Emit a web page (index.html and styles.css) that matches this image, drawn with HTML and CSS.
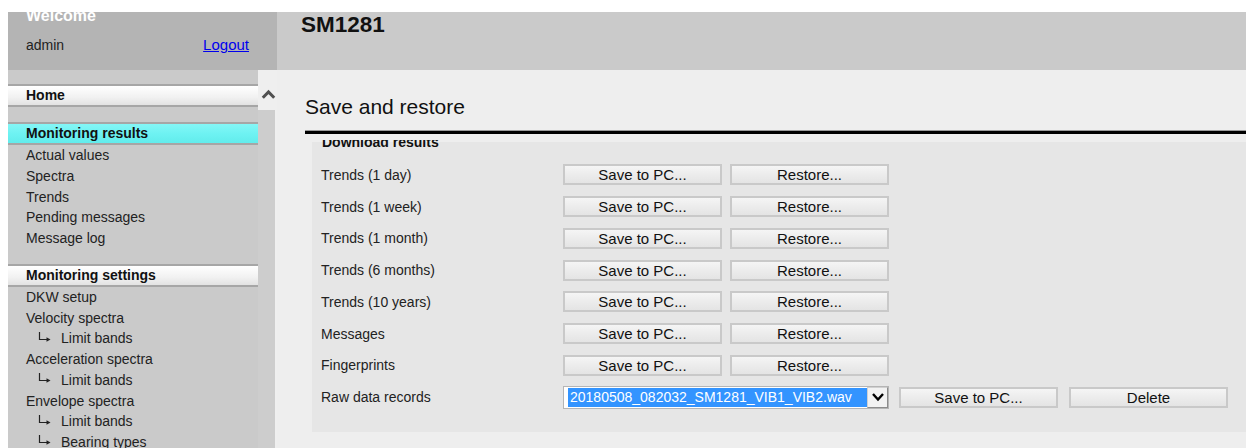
FILE: index.html
```html
<!DOCTYPE html>
<html lang="en">
<head>
<meta charset="utf-8">
<title>SM1281 - Save and restore</title>
<link rel="stylesheet" href="styles.css">
</head>
<body>
<div class="app">
  <div class="user">
    <div class="welcome">Welcome</div>
    <div class="user-row">
      <span class="user-name">admin</span>
      <a class="logout" href="#">Logout</a>
    </div>
  </div>
  <div class="device">SM1281</div>

  <nav class="nav">
    <div class="nav-head nav-home">Home</div>
    <div class="nav-head nav-active">Monitoring results</div>
    <div class="nav-item">Actual values</div>
    <div class="nav-item">Spectra</div>
    <div class="nav-item">Trends</div>
    <div class="nav-item">Pending messages</div>
    <div class="nav-item">Message log</div>
    <div class="nav-head nav-group">Monitoring settings</div>
    <div class="nav-item">DKW setup</div>
    <div class="nav-item">Velocity spectra</div>
    <div class="nav-item nav-sub"><svg class="sub-arrow" width="14" height="10" viewBox="0 0 14 10"><path d="M1.5 0V7.5H9" fill="none" stroke="#222" stroke-width="1.2"/><path d="M8.5 5.2L12.5 7.5L8.5 9.8Z" fill="#222"/></svg>Limit bands</div>
    <div class="nav-item">Acceleration spectra</div>
    <div class="nav-item nav-sub"><svg class="sub-arrow" width="14" height="10" viewBox="0 0 14 10"><path d="M1.5 0V7.5H9" fill="none" stroke="#222" stroke-width="1.2"/><path d="M8.5 5.2L12.5 7.5L8.5 9.8Z" fill="#222"/></svg>Limit bands</div>
    <div class="nav-item">Envelope spectra</div>
    <div class="nav-item nav-sub"><svg class="sub-arrow" width="14" height="10" viewBox="0 0 14 10"><path d="M1.5 0V7.5H9" fill="none" stroke="#222" stroke-width="1.2"/><path d="M8.5 5.2L12.5 7.5L8.5 9.8Z" fill="#222"/></svg>Limit bands</div>
    <div class="nav-item nav-sub"><svg class="sub-arrow" width="14" height="10" viewBox="0 0 14 10"><path d="M1.5 0V7.5H9" fill="none" stroke="#222" stroke-width="1.2"/><path d="M8.5 5.2L12.5 7.5L8.5 9.8Z" fill="#222"/></svg>Bearing types</div>
  </nav>

  <div class="scrollbar">
    <div class="scroll-up"><svg width="15" height="11" viewBox="0 0 15 11"><path d="M1.8 8.8L7.5 3L13.2 8.8" fill="none" stroke="#505050" stroke-width="3"/></svg></div>
    <div class="scroll-thumb"></div>
  </div>

  <main class="main">
    <h1 class="title">Save and restore</h1>
    <div class="rule"></div>
    <div class="viewport">
      <fieldset class="panel">
        <legend class="panel-legend">Download results</legend>
        <div class="rows">
          <div class="row"><span class="label">Trends (1 day)</span><button class="btn">Save to PC...</button><button class="btn">Restore...</button></div>
          <div class="row"><span class="label">Trends (1 week)</span><button class="btn">Save to PC...</button><button class="btn">Restore...</button></div>
          <div class="row"><span class="label">Trends (1 month)</span><button class="btn">Save to PC...</button><button class="btn">Restore...</button></div>
          <div class="row"><span class="label">Trends (6 months)</span><button class="btn">Save to PC...</button><button class="btn">Restore...</button></div>
          <div class="row"><span class="label">Trends (10 years)</span><button class="btn">Save to PC...</button><button class="btn">Restore...</button></div>
          <div class="row"><span class="label">Messages</span><button class="btn">Save to PC...</button><button class="btn">Restore...</button></div>
          <div class="row"><span class="label">Fingerprints</span><button class="btn">Save to PC...</button><button class="btn">Restore...</button></div>
          <div class="row"><span class="label">Raw data records</span>
            <div class="select">
              <span class="select-value">20180508_082032_SM1281_VIB1_VIB2.wav</span>
              <span class="select-arrow"><svg width="14" height="10" viewBox="0 0 14 10"><path d="M2 2L7 7.5L12 2" fill="none" stroke="#000" stroke-width="2.4"/></svg></span>
            </div>
            <button class="btn btn-save">Save to PC...</button><button class="btn btn-delete">Delete</button>
          </div>
        </div>
      </fieldset>
    </div>
  </main>
</div>
</body>
</html>
```

FILE: styles.css
```css
html, body {
  margin: 0;
  padding: 0;
  background: #ffffff;
  overflow: hidden;
}

body {
  font-family: "Liberation Sans", Arial, sans-serif;
  font-size: 14px;
  color: #1b1b1b;
}

.app {
  margin: 12px 0 0 8px;
  height: 436px;
  overflow: hidden;
  display: grid;
  grid-template-columns: 250px 19px 1fr;
  grid-template-rows: 58px 1fr;
}

/* top bar */
.user {
  grid-column: 1 / 3;
  background: #b4b4b4;
  padding: 0 28px 0 18px;
  overflow: hidden;
}

.welcome {
  margin-top: -5px;
  font-size: 16px;
  font-weight: bold;
  line-height: 18px;
  color: #ffffff;
}

.user-row {
  margin-top: 9px;
  display: flex;
  justify-content: space-between;
  align-items: baseline;
  line-height: 22px;
}

.user-name {
  font-size: 14px;
  color: #222;
}

.logout {
  font-size: 15px;
  color: #0000ee;
  text-decoration: underline;
}

.device {
  background: #cacaca;
  padding-left: 24px;
  font-size: 22.5px;
  font-weight: bold;
  line-height: 26px;
  color: #111;
}

/* navigation */
.nav {
  background: #cacaca;
  padding-top: 14px;
  overflow: hidden;
}

.nav-head {
  height: 19px;
  line-height: 19px;
  padding-left: 18px;
  font-weight: bold;
  border-top: 2px solid #a6a6a6;
  border-bottom: 2px solid #a6a6a6;
  color: #111;
}

.nav-home {
  background: linear-gradient(#ffffff, #f1f1f1 60%, #e2e2e2);
}

.nav-active {
  margin-top: 15px;
  background: linear-gradient(#84f6f6, #6ef2f2 50%, #62ecec);
}

.nav-group {
  margin-top: 15px;
  background: linear-gradient(#ffffff, #f1f1f1 60%, #e2e2e2);
}

.nav-item {
  height: 20.75px;
  line-height: 20.75px;
  padding-left: 18px;
  white-space: nowrap;
  color: #222;
}

.nav-sub {
  padding-left: 30px;
  display: flex;
  align-items: center;
}

.sub-arrow {
  margin-right: 9px;
  margin-top: -4px;
}

/* sidebar scrollbar */
.scrollbar {
  background: #efefef;
  display: flex;
  flex-direction: column;
}

.scroll-up {
  height: 40px;
  display: flex;
  align-items: center;
  justify-content: center;
  padding: 9px 0 0 1px;
  box-sizing: border-box;
}

.scroll-thumb {
  flex: 1;
  margin-right: 2px;
  background: #cdcdcd;
}

/* main content */
.main {
  background: #eeeeee;
  padding-left: 28px;
  display: flex;
  flex-direction: column;
  min-width: 0;
}

.title {
  margin: 25px 0 0;
  font-size: 21px;
  font-weight: normal;
  line-height: 24px;
  color: #111;
}

.rule {
  margin-top: 12px;
  height: 3px;
  background: #000;
  box-shadow: 0 -1px 0 #9a9a9a;
}

.viewport {
  margin-top: 6px;
  flex: 1;
  overflow: hidden;
}

.panel {
  margin: -6px 0 0 7px;
  padding: 0 0 19px 9px;
  border: none;
  background: #e6e6e6;
  min-width: 0;
}

.panel-legend {
  padding: 0 0 0 1px;
  font-size: 14px;
  font-weight: bold;
  line-height: 16px;
  color: #111;
}

.rows {
  margin-top: 9px;
}

.row {
  height: 31.75px;
  display: flex;
  align-items: center;
}

.label {
  width: 242px;
  flex: none;
  color: #222;
}

.btn {
  width: 159px;
  height: 21px;
  flex: none;
  box-sizing: border-box;
  padding: 0;
  border: 2px solid #c9c9c9;
  background: linear-gradient(#f5f5f5, #ececec 50%, #e4e4e4);
  font-family: "Liberation Sans", Arial, sans-serif;
  font-size: 15px;
  line-height: 17px;
  color: #111;
}

.btn + .btn {
  margin-left: 8px;
}

.select {
  width: 326px;
  height: 23px;
  flex: none;
  box-sizing: border-box;
  border: 1px solid #b5b5b5;
  background: #ffffff;
  display: flex;
  align-items: stretch;
  padding: 1px 0 1px 4px;
}

.select-value {
  flex: 1;
  background: #3394ff;
  color: #ffffff;
  font-size: 14px;
  line-height: 19px;
  padding-left: 2px;
  white-space: nowrap;
  overflow: hidden;
}

.select-arrow {
  width: 21px;
  box-sizing: border-box;
  margin: -1px 0;
  border: 1px solid #8c8c8c;
  border-top-color: #d0d0d0;
  border-left-color: #d0d0d0;
  background: #f2f2f2;
  display: flex;
  align-items: center;
  justify-content: center;
}

.btn.btn-save {
  margin-left: 10px;
}

.btn.btn-delete {
  margin-left: 11px;
}
```
